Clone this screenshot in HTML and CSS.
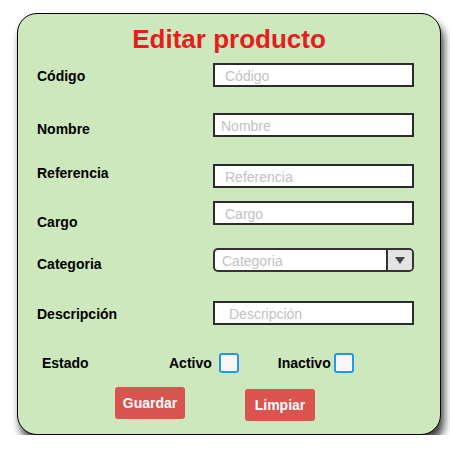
FILE: index.html
```html
<!DOCTYPE html>
<html lang="es">
<head>
<meta charset="utf-8">
<title>Editar producto</title>
<link rel="stylesheet" href="styles.css">
</head>
<body>
<form class="card">
  <h1 class="title">Editar producto</h1>

  <div class="row row-codigo">
    <label class="lbl">Código</label>
    <input class="field field-indent" type="text" placeholder="Código">
  </div>

  <div class="row row-nombre">
    <label class="lbl">Nombre</label>
    <input class="field" type="text" placeholder="Nombre">
  </div>

  <div class="row row-referencia">
    <label class="lbl">Referencia</label>
    <input class="field field-indent" type="text" placeholder="Referencia">
  </div>

  <div class="row row-cargo">
    <label class="lbl">Cargo</label>
    <input class="field field-indent" type="text" placeholder="Cargo">
  </div>

  <div class="row row-categoria">
    <label class="lbl">Categoria</label>
    <div class="select">
      <select class="select-input">
        <option>Categoria</option>
      </select>
      <span class="select-arrow"><span class="triangle"></span></span>
    </div>
  </div>

  <div class="row row-descripcion">
    <label class="lbl">Descripción</label>
    <input class="field field-indent-wide" type="text" placeholder="Descripción">
  </div>

  <div class="status">
    <span class="status-label">Estado</span>
    <label class="check-group">
      <span class="check-text">Activo</span>
      <input class="box" type="checkbox">
    </label>
    <label class="check-group check-group-second">
      <span class="check-text check-text-tight">Inactivo</span>
      <input class="box" type="checkbox">
    </label>
  </div>

  <div class="actions">
    <button class="btn" type="button">Guardar</button>
    <button class="btn btn-offset" type="button">Limpiar</button>
  </div>
</form>
</body>
</html>
```

FILE: styles.css
```css
body {
  margin: 0;
  background: #ffffff;
  font-family: "Liberation Sans", Arial, sans-serif;
  color: #000;
}

.card {
  box-sizing: border-box;
  width: 424px;
  height: 422px;
  margin: 13px 0 0 17px;
  padding-top: 10px;
  background: #cde8bd;
  border: 1px solid #000;
  border-radius: 20px;
  box-shadow: 3px 8px 8px rgba(0, 0, 0, 0.75);
}

.title {
  margin: 0;
  font-size: 26px;
  line-height: 30px;
  font-weight: bold;
  text-align: center;
  color: #e81c1c;
}

.row {
  display: flex;
  align-items: flex-start;
  height: 24px;
  padding-left: 19px;
}

.lbl {
  width: 176px;
  flex: none;
  font-size: 14px;
  line-height: 16px;
  font-weight: bold;
}

.row-codigo { margin-top: 9px; }
.row-codigo .lbl { padding-top: 5px; }

.row-nombre { margin-top: 26px; }
.row-nombre .lbl { padding-top: 8px; }

.row-referencia { margin-top: 27px; }
.row-referencia .lbl { padding-top: 1px; }

.row-cargo { margin-top: 13px; }
.row-cargo .lbl { padding-top: 13px; }

.row-categoria { margin-top: 23px; }
.row-categoria .lbl { padding-top: 8px; }

.row-descripcion { margin-top: 29px; }
.row-descripcion .lbl { padding-top: 5px; }

.field {
  box-sizing: border-box;
  width: 201px;
  height: 24px;
  margin: 0;
  padding: 2px 0 0 6px;
  border: 2px solid #2b2b2b;
  border-radius: 0;
  background: #fff;
  font-family: "Liberation Sans", Arial, sans-serif;
  font-size: 14px;
  color: #000;
  outline: none;
}

.field::placeholder {
  color: #c2c2c2;
  opacity: 1;
}

.field-indent { padding-left: 10px; }
.field-indent-wide { padding-left: 14px; }

.select {
  box-sizing: border-box;
  display: flex;
  width: 201px;
  height: 24px;
  border: 2px solid #333;
  border-radius: 5px;
  background: #fff;
  overflow: hidden;
}

.select-input {
  flex: 1;
  min-width: 0;
  margin: 0;
  padding: 2px 0 0 7px;
  border: 0;
  background: transparent;
  appearance: none;
  -webkit-appearance: none;
  font-family: "Liberation Sans", Arial, sans-serif;
  font-size: 14px;
  color: #c2c2c2;
  outline: none;
}

.select-arrow {
  width: 24px;
  flex: none;
  display: flex;
  align-items: center;
  justify-content: center;
  border-left: 2px solid #333;
  background: #e3e3e3;
}

.triangle {
  width: 0;
  height: 0;
  border-left: 5px solid transparent;
  border-right: 5px solid transparent;
  border-top: 7px solid #444;
}

.status {
  display: flex;
  align-items: center;
  height: 20px;
  margin-top: 28px;
  padding-left: 24px;
  font-size: 14px;
  line-height: 16px;
  font-weight: bold;
}

.status-label {
  width: 127px;
}

.check-group {
  display: flex;
  align-items: center;
}

.check-group-second {
  margin-left: 39px;
}

.check-text {
  margin-right: 7px;
}

.check-text-tight {
  margin-right: 3px;
}

.box {
  box-sizing: border-box;
  appearance: none;
  -webkit-appearance: none;
  width: 20px;
  height: 20px;
  margin: 0;
  border: 2px solid #2196f3;
  border-radius: 3px;
  background: #f7f7f7;
}

.actions {
  display: flex;
  align-items: flex-start;
  gap: 60px;
  margin-top: 14px;
  padding-left: 97px;
}

.btn {
  width: 70px;
  height: 32px;
  padding: 0;
  border: 0;
  border-radius: 3px;
  background: #d9534f;
  color: #fff;
  font-family: "Liberation Sans", Arial, sans-serif;
  font-size: 14px;
  font-weight: bold;
}

.btn-offset {
  margin-top: 2px;
}
```
